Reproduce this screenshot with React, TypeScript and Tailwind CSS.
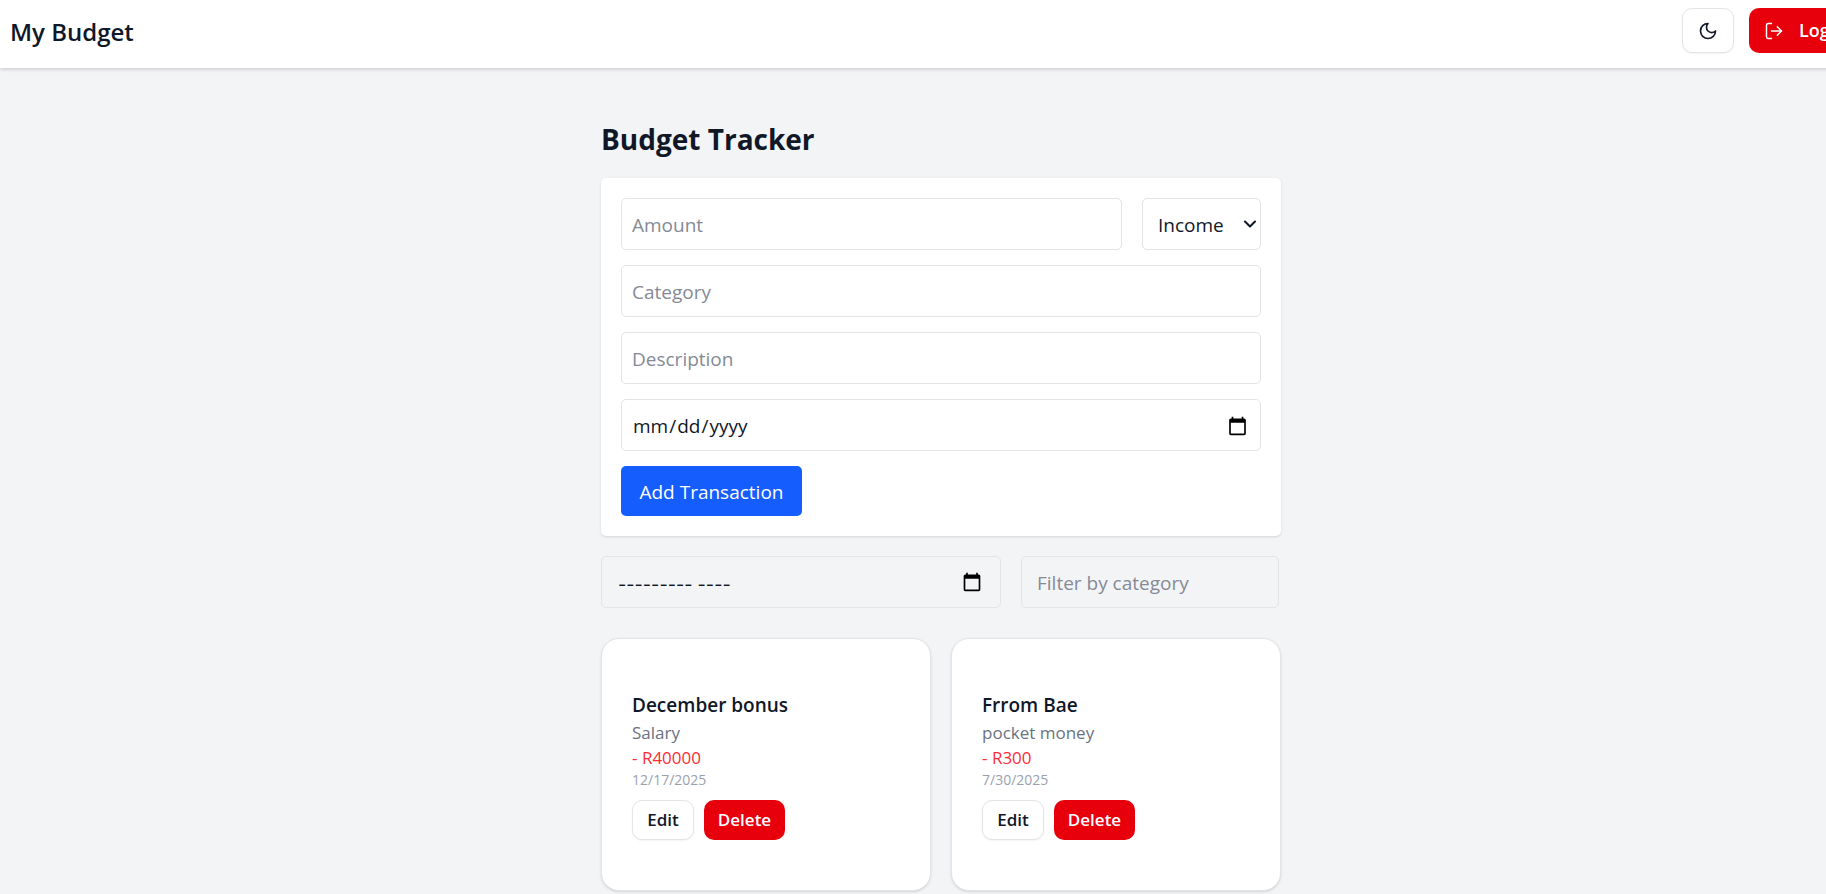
import { useState } from "react";
import { ChevronDown, LogOut } from "lucide-react";

interface Transaction {
  title: string;
  category: string;
  amount: string;
  date: string;
}

const transactions: Transaction[] = [
  { title: "December bonus", category: "Salary", amount: "- R40000", date: "12/17/2025" },
  { title: "Frrom Bae", category: "pocket money", amount: "- R300", date: "7/30/2025" },
];

const field =
  "h-[52px] w-full min-w-0 rounded-[5px] border border-[#e4e4e7] px-2.5 pt-0.5 text-[19px] placeholder:text-[#858a96] [&::-webkit-calendar-picker-indicator]:size-[21px]";

function MoonIcon() {
  return (
    <svg
      viewBox="0 0 24 24"
      className="size-5"
      fill="none"
      stroke="currentColor"
      strokeWidth={2}
      strokeLinecap="round"
      strokeLinejoin="round"
      aria-hidden="true"
    >
      <path d="M12 3a6 6 0 0 0 9 9 9 9 0 1 1-9-9Z" />
    </svg>
  );
}

function CalendarIcon() {
  return (
    <svg viewBox="0 0 24 24" className="size-5" fill="#000" aria-hidden="true">
      <path d="M20 3h-1V1h-2v2H7V1H5v2H4c-1.1 0-2 .9-2 2v16c0 1.1.9 2 2 2h16c1.1 0 2-.9 2-2V5c0-1.1-.9-2-2-2zm0 18H4V8h16v13z" />
    </svg>
  );
}

function Header() {
  return (
    <header className="flex items-start justify-between bg-white pt-2 pr-[11px] pb-[15px] pl-2.5 shadow-[0_1px_4px_rgba(0,0,0,0.2)]">
      <h1 className="pt-1.5 text-[24px] leading-9 font-semibold">My Budget</h1>
      <div className="flex gap-[15px]">
        <button
          type="button"
          aria-label="Toggle dark mode"
          className="flex h-[45px] w-[52px] items-center justify-center rounded-[10px] border border-[#e4e4e7] bg-white shadow-xs"
        >
          <MoonIcon />
        </button>
        <button
          type="button"
          className="flex h-[45px] w-[122px] items-center gap-[15px] rounded-[10px] bg-[#e7000b] px-[15px] text-[18px] font-semibold text-white"
        >
          <LogOut size={20} strokeWidth={1.75} className="shrink-0" />
          Logout
        </button>
      </div>
    </header>
  );
}

function TransactionForm() {
  return (
    <form
      onSubmit={(event) => event.preventDefault()}
      className="flex flex-col items-start gap-[15px] rounded-[5px] bg-white p-5 shadow-sm"
    >
      <div className="flex w-full gap-5">
        <input type="number" aria-label="Amount" placeholder="Amount" className={field} />
        <div className="relative w-[119px] shrink-0">
          <select
            aria-label="Type"
            className="h-[52px] w-full appearance-none rounded-[5px] border border-[#e4e4e7] bg-white px-[15px] pt-0.5 text-[19px]"
          >
            <option>Income</option>
            <option>Expense</option>
          </select>
          <ChevronDown
            size={20}
            strokeWidth={2.5}
            className="pointer-events-none absolute inset-y-0 right-px my-auto"
            aria-hidden="true"
          />
        </div>
      </div>
      <input type="text" aria-label="Category" placeholder="Category" className={field} />
      <input type="text" aria-label="Description" placeholder="Description" className={field} />
      <input type="date" aria-label="Date" className={field} />
      <button type="submit" className="h-[50px] w-[181px] rounded-[5px] bg-[#155dfc] pt-0.5 text-[19px] text-white">
        Add Transaction
      </button>
    </form>
  );
}

function Filters() {
  const [month, setMonth] = useState("");
  const [category, setCategory] = useState("");
  return (
    <div className="flex gap-5 pr-0.5">
      <div className="flex h-[52px] w-[400px] shrink-0 items-center rounded-[5px] border border-[#e4e4e7] pr-[18px] pl-4">
        <input
          type="text"
          aria-label="Month"
          placeholder="--------- ----"
          value={month}
          onChange={(event) => setMonth(event.target.value)}
          className="min-w-0 grow pt-1 font-['Inter','Open_Sans',sans-serif] text-[18px] outline-none placeholder:text-[#101828]"
        />
        <button type="button" aria-label="Show month picker">
          <CalendarIcon />
        </button>
      </div>
      <input
        type="text"
        aria-label="Filter by category"
        placeholder="Filter by category"
        value={category}
        onChange={(event) => setCategory(event.target.value)}
        className="h-[52px] min-w-0 grow rounded-[5px] border border-[#e4e4e7] px-[15px] pt-0.5 text-[19px] placeholder:text-[#858a96]"
      />
    </div>
  );
}

function TransactionCard({ title, category, amount, date }: Transaction) {
  return (
    <article className="rounded-[18px] border border-[#e4e4e7] bg-white px-[30px] pt-[51px] pb-[50px] shadow-sm">
      <h3 className="text-[19px] leading-[30px] font-semibold">{title}</h3>
      <p className="text-[17px] leading-[25px] text-gray-500">{category}</p>
      <p className="text-[17px] leading-[25px] text-[#fb2c36]">{amount}</p>
      <p className="text-[14px] leading-5 text-gray-400">{date}</p>
      <div className="mt-2.5 flex gap-2.5">
        <button
          type="button"
          className="h-10 w-[62px] rounded-[10px] border border-[#e4e4e7] bg-white text-[17px] font-semibold shadow-xs"
        >
          Edit
        </button>
        <button type="button" className="h-10 w-[81px] rounded-[10px] bg-[#e7000b] text-[17px] font-semibold text-white">
          Delete
        </button>
      </div>
    </article>
  );
}

export default function App() {
  return (
    <div className="min-h-screen overflow-x-hidden bg-gray-100 font-['Open_Sans','Noto_Sans',sans-serif] text-[#101828]">
      <div className="w-[calc(100%+56px)]">
        <Header />
        <main className="mx-auto max-w-[680px] pt-[51px]">
          <h2 className="mb-[19px] text-[28px] leading-10 font-bold">Budget Tracker</h2>
          <div className="flex flex-col gap-5">
            <TransactionForm />
            <Filters />
          </div>
          <div className="mt-[30px] grid grid-cols-2 gap-5">
            {transactions.map((transaction) => (
              <TransactionCard key={transaction.title} {...transaction} />
            ))}
          </div>
        </main>
      </div>
    </div>
  );
}
